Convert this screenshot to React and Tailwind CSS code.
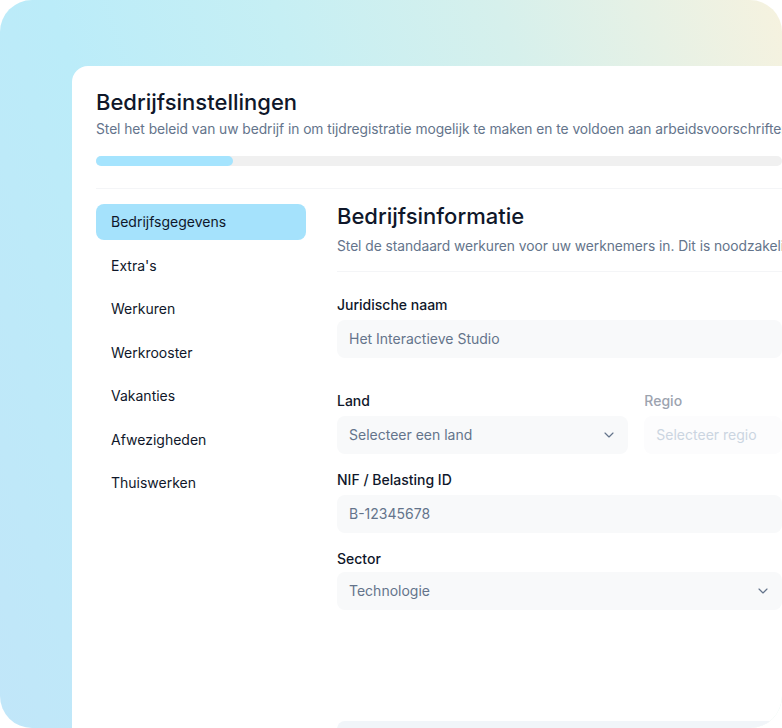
import React from "react";

function Chevron({ className = "" }) {
  return (
    <svg
      width="16"
      height="16"
      viewBox="0 0 24 24"
      fill="none"
      stroke="currentColor"
      strokeWidth="1.75"
      strokeLinecap="round"
      strokeLinejoin="round"
      className={className}
    >
      <path d="m6 9 6 6 6-6" />
    </svg>
  );
}

const navItems = [
  "Bedrijfsgegevens",
  "Extra's",
  "Werkuren",
  "Werkrooster",
  "Vakanties",
  "Afwezigheden",
  "Thuiswerken",
];

export default function App() {
  return (
    <div
      className="w-[782px] h-[728px] overflow-hidden rounded-[32px] bg-[linear-gradient(72deg,#c1e6f9_0%,#bbecf9_28%,#c6eff4_50%,#d6f0ec_72%,#f6f2df_100%)] pl-[72px] pt-[66px] text-[#0f172a]"
      style={{ fontFamily: "Inter, 'Noto Sans', sans-serif" }}
    >
      <div className="w-[734px] h-[700px] rounded-tl-2xl bg-white px-6 pt-[20px]">
        <h1 className="text-[22px] leading-8 font-medium text-[#0f172a]">
          Bedrijfsinstellingen
        </h1>
        <p className="mt-px text-[13.8px] leading-5 text-[#64748b] whitespace-nowrap tracking-[-0.05px]">
          Stel het beleid van uw bedrijf in om tijdregistratie mogelijk te maken en te voldoen aan arbeidsvoorschriften.
        </p>
        <div className="mt-[17px] h-[10px] w-full rounded-full bg-[#f0f0f0]">
          <div className="h-full w-[137px] rounded-full bg-[#a5e4fe]" />
        </div>
        <div className="mt-[22px] h-px w-full bg-[#f4f5f7]" />

        <div className="mt-[15px] flex gap-[31px]">
          <nav className="flex w-[210px] shrink-0 flex-col gap-[7.5px]">
            {navItems.map((item, i) => (
              <div
                key={item}
                className={
                  i === 0
                    ? "flex h-9 items-center rounded-lg bg-[#a5e2fc] px-[15px] text-sm text-[#0f172a]"
                    : "flex h-9 items-center rounded-lg px-[15px] text-sm text-[#0f172a]"
                }
              >
                {item}
              </div>
            ))}
          </nav>

          <main className="flex w-[445px] shrink-0 flex-col">
            <h2 className="text-[22px] leading-6 font-medium text-[#0f172a]">
              Bedrijfsinformatie
            </h2>
            <p className="mt-2 text-[13.8px] leading-5 text-[#64748b] whitespace-nowrap tracking-[-0.05px]">
              Stel de standaard werkuren voor uw werknemers in. Dit is noodzakelijk voor de berekening.
            </p>
            <div className="mt-[15px] h-px w-full bg-[#f4f5f7]" />

            <label className="mt-[23px] text-sm leading-5 font-medium text-[#0f172a]">
              Juridische naam
            </label>
            <div className="mt-[5px] flex h-[38px] items-center rounded-lg bg-[#f8f9fa] px-3 text-sm text-[#64748b]">
              Het Interactieve Studio
            </div>

            <div className="mt-[33px] grid grid-cols-3 gap-x-4">
              <div className="col-span-2 flex flex-col">
                <label className="text-sm leading-5 font-medium text-[#0f172a]">Land</label>
                <div className="mt-[5px] flex h-[38px] items-center justify-between rounded-lg bg-[#f8f9fa] pl-3 pr-[11px] text-sm text-[#64748b]">
                  <span>Selecteer een land</span>
                  <Chevron className="text-[#64748b]" />
                </div>
              </div>
              <div className="flex flex-col">
                <label className="text-sm leading-5 font-medium text-[#9ca3af]">Regio</label>
                <div className="mt-[5px] flex h-[38px] items-center rounded-lg bg-[#fcfcfd] px-3 text-sm text-[#cbd5e1] whitespace-nowrap">
                  Selecteer regio
                </div>
              </div>
            </div>

            <label className="mt-[16px] text-sm leading-5 font-medium text-[#0f172a]">
              NIF / Belasting ID
            </label>
            <div className="mt-[5px] flex h-[38px] items-center rounded-lg bg-[#f8f9fa] px-3 text-sm text-[#64748b]">
              B-12345678
            </div>

            <label className="mt-[16px] text-sm leading-5 font-medium text-[#0f172a]">
              Sector
            </label>
            <div className="mt-[3px] flex h-[38px] items-center justify-between rounded-lg bg-[#f8f9fa] pl-3 pr-[11px] text-sm text-[#64748b]">
              <span>Technologie</span>
              <Chevron className="text-[#64748b]" />
            </div>

            <div className="mt-[111px] h-[40px] w-full rounded-lg bg-[#f1f5f9]" />
          </main>
        </div>
      </div>
    </div>
  );
}
